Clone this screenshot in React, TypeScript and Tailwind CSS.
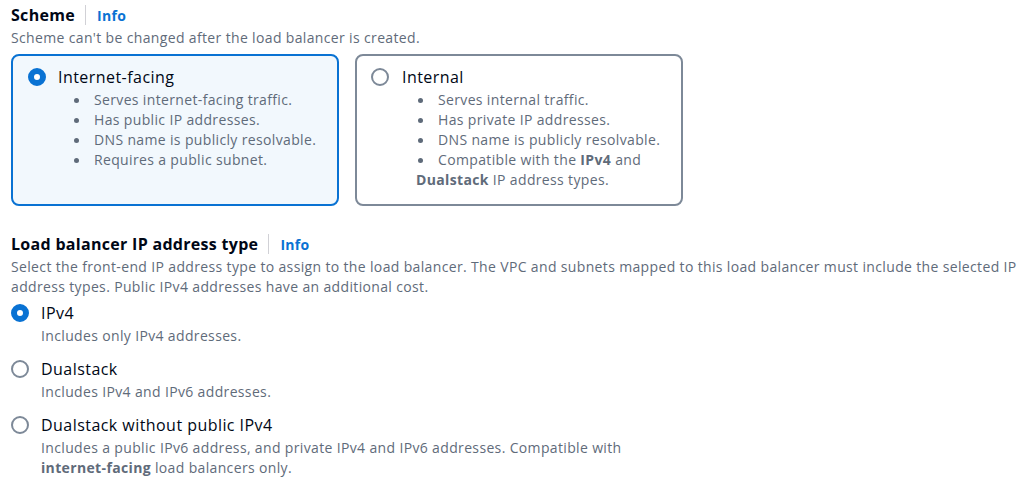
import React, { useState } from 'react';

const Radio = ({ checked }: { checked: boolean }) => (
  <span
    className={`inline-block w-[18px] h-[18px] rounded-full flex-shrink-0 bg-white ${
      checked ? 'border-[6px] border-[#0972d3]' : 'border-2 border-[#7d8998]'
    }`}
  />
);

const Bullet = ({ children }: { children: React.ReactNode }) => (
  <li>
    <span className="inline-block w-[5px] h-[5px] rounded-full bg-[#5f6b7a] ml-[2px] mr-[15px] align-middle relative top-[-1px]" />
    {children}
  </li>
);

const Heading = ({ title }: { title: string }) => (
  <div className="flex items-center h-[22px]">
    <h3 className="text-[16px] leading-[22px] font-bold text-[#000716] tracking-[0.3px]">{title}</h3>
    <span className="inline-block w-px h-[20px] bg-[#d1d1d6] ml-[10px] mr-[11px]" />
    <a className="text-[14px] font-bold text-[#0972d3] tracking-[0.3px] cursor-pointer">Info</a>
  </div>
);

const App: React.FC = () => {
  const [scheme, setScheme] = useState<'internet' | 'internal'>('internet');
  const [ipType, setIpType] = useState('ipv4');

  const ipOptions = [
    { id: 'ipv4', label: 'IPv4', desc: <>Includes only IPv4 addresses.</> },
    { id: 'dualstack', label: 'Dualstack', desc: <>Includes IPv4 and IPv6 addresses.</> },
    {
      id: 'dualstack-no-v4',
      label: 'Dualstack without public IPv4',
      desc: (
        <>
          Includes a public IPv6 address, and private IPv4 and IPv6 addresses. Compatible with
          <br />
          <b>internet-facing</b> load balancers only.
        </>
      ),
    },
  ];

  const body = 'text-[14px] leading-[20px] text-[#5f6b7a] tracking-[0.35px]';
  const label = 'text-[16px] leading-[22px] text-[#000716] tracking-[0.45px]';

  return (
    <div
      className="w-[1033px] h-[485px] bg-white px-[11px] pt-[4px] overflow-hidden"
      style={{ fontFamily: '"Open Sans", "Noto Sans", Arial, sans-serif' }}
    >
      {/* Scheme */}
      <Heading title="Scheme" />
      <p className={`mt-[2px] ${body}`}>Scheme can't be changed after the load balancer is created.</p>

      <div className="mt-[6px] flex gap-4">
        <div
          onClick={() => setScheme('internet')}
          className={`w-[328px] h-[152px] rounded-lg border-2 pt-[10px] pb-[14px] pl-[15px] pr-4 cursor-pointer ${
            scheme === 'internet' ? 'border-[#0972d3] bg-[#f2f8fd]' : 'border-[#7d8998] bg-white'
          }`}
        >
          <div className="flex items-center gap-3 h-[22px]">
            <Radio checked={scheme === 'internet'} />
            <span className={label}>Internet-facing</span>
          </div>
          <ul className={`mt-[2px] ml-[44px] ${body}`}>
            <Bullet>Serves internet-facing traffic.</Bullet>
            <Bullet>Has public IP addresses.</Bullet>
            <Bullet>DNS name is publicly resolvable.</Bullet>
            <Bullet>Requires a public subnet.</Bullet>
          </ul>
        </div>

        <div
          onClick={() => setScheme('internal')}
          className={`w-[328px] h-[152px] rounded-lg border-2 pt-[10px] pb-[14px] pl-[14px] pr-4 cursor-pointer ${
            scheme === 'internal' ? 'border-[#0972d3] bg-[#f2f8fd]' : 'border-[#7d8998] bg-white'
          }`}
        >
          <div className="flex items-center gap-[13px] h-[22px]">
            <Radio checked={scheme === 'internal'} />
            <span className={label}>Internal</span>
          </div>
          <ul className={`mt-[2px] ml-[45px] ${body}`}>
            <Bullet>Serves internal traffic.</Bullet>
            <Bullet>Has private IP addresses.</Bullet>
            <Bullet>DNS name is publicly resolvable.</Bullet>
            <Bullet>
              Compatible with the <b>IPv4</b> and <b>Dualstack</b> IP address types.
            </Bullet>
          </ul>
        </div>
      </div>

      {/* IP address type */}
      <div className="mt-[27px]">
        <Heading title="Load balancer IP address type" />
      </div>
      <p className={`mt-[2px] w-[1011px] ${body}`}>
        Select the front-end IP address type to assign to the load balancer. The VPC and subnets mapped to this load
        balancer must include the selected IP address types. Public IPv4 addresses have an additional cost.
      </p>

      <div className="mt-[5px] flex flex-col gap-[12px]">
        {ipOptions.map(o => (
          <div key={o.id} onClick={() => setIpType(o.id)} className="cursor-pointer">
            <div className="flex items-center gap-3 h-[22px]">
              <Radio checked={ipType === o.id} />
              <span className={label}>{o.label}</span>
            </div>
            <p className={`mt-[2px] ml-[30px] ${body}`}>{o.desc}</p>
          </div>
        ))}
      </div>
    </div>
  );
};

export default App;
